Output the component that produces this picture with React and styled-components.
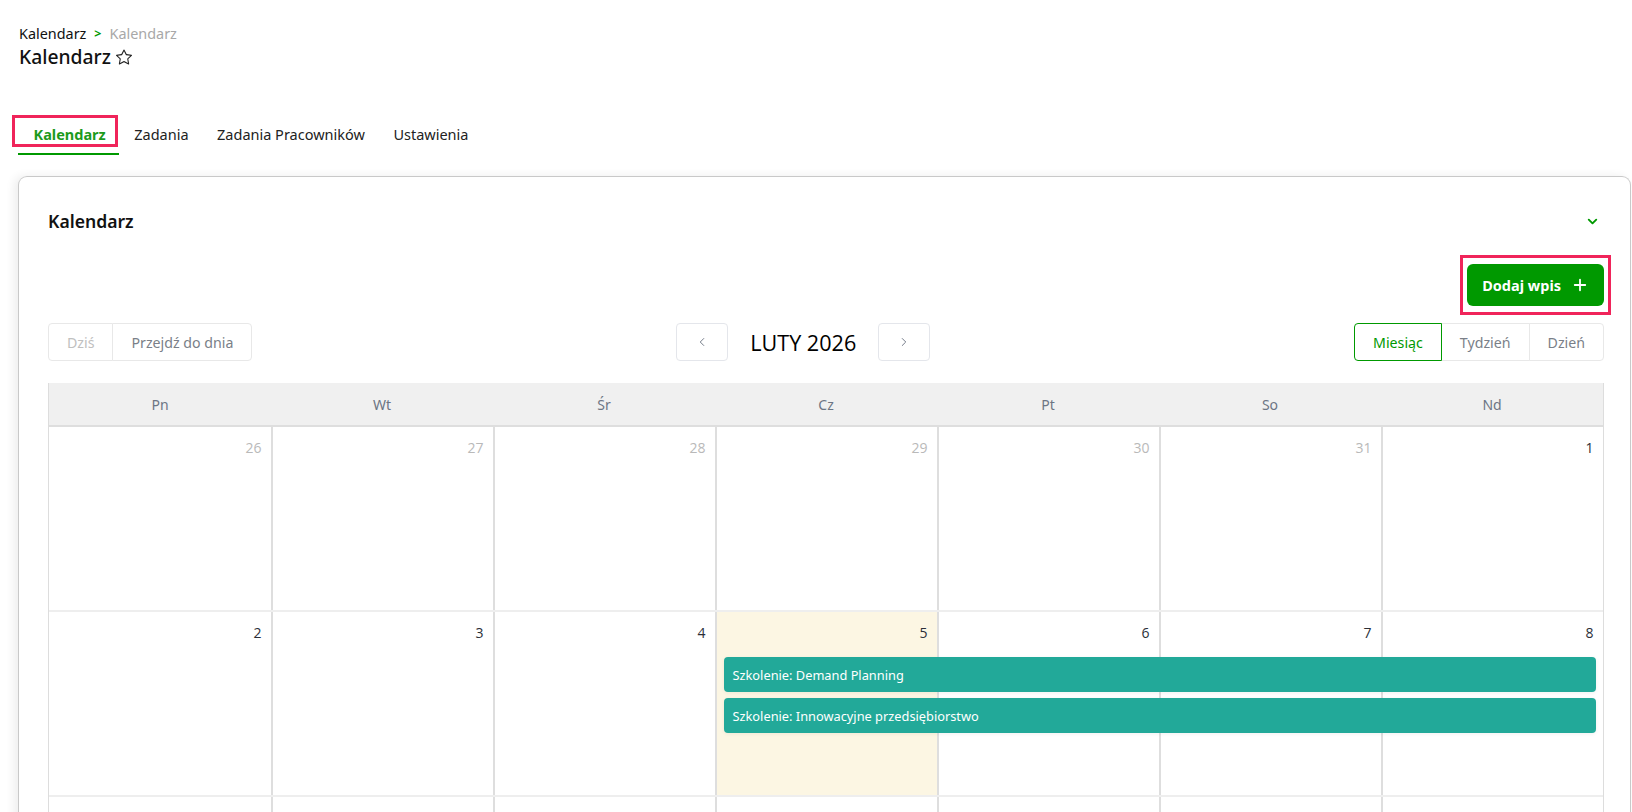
import React from 'react'
import styled, { createGlobalStyle, css } from 'styled-components'
import { BsStar } from 'react-icons/bs'
import { ChevronDown, ChevronLeft, ChevronRight, Plus } from 'lucide-react'

const green = '#009900'
const highlight = '#f0245a'

const GlobalStyle = createGlobalStyle`
  html { scrollbar-width: none; }
  html::-webkit-scrollbar { display: none; }
  body {
    margin: 0;
    background: #fff;
    font-family: 'Noto Sans', 'Open Sans', sans-serif;
    color: #111;
  }
`

const Page = styled.div`
  padding: 24px 1px 0 18px;
`

const Breadcrumb = styled.div`
  display: flex;
  align-items: center;
  gap: 8px;
  font-size: 14.4px;
  line-height: 20px;
  padding-left: 1px;
`
const Crumb = styled.span`
  color: ${p => (p.muted ? '#a8a8a8' : '#111')};
`
const Sep = styled.span`
  color: ${green};
  font-weight: 700;
  font-size: 12.5px;
`

const Title = styled.h1`
  margin: 0;
  display: flex;
  align-items: center;
  gap: 5px;
  font-size: 19.3px;
  line-height: 26px;
  font-weight: 500;
  padding-left: 1px;
  svg { color: #222; }
`

const Tabs = styled.nav`
  display: flex;
  margin-top: 45px;
`
const Tab = styled.div`
  position: relative;
  padding: 9px 13px 9px 15.5px;
  font-size: 14.5px;
  line-height: 20px;
  color: #222;
  border-bottom: 2px solid transparent;
  ${p => p.active && css`
    color: #1c9a1c;
    font-weight: 700;
    border-bottom-color: ${green};
  `}
  ${p => p.marked && css`
    &::after {
      content: '';
      position: absolute;
      top: 0;
      left: -6px;
      right: 1px;
      bottom: 6px;
      border: 3px solid ${highlight};
    }
  `}
`

const Card = styled.section`
  margin-top: 21px;
  border: 1px solid #c9c9c9;
  border-bottom: none;
  border-radius: 9px 9px 0 0;
  box-shadow: -4px 0 10px rgba(0, 0, 0, 0.07);
  padding: 33px 26px 0 29px;
`
const CardHeader = styled.div`
  display: flex;
  align-items: center;
  justify-content: space-between;
  padding-right: 4px;
`
const CardTitle = styled.h2`
  margin: 0;
  font-size: 17.6px;
  line-height: 22px;
  font-weight: 600;
`

const ActionRow = styled.div`
  display: flex;
  justify-content: flex-end;
  margin-top: 23px;
  margin-right: -7px;
`
const Marked = styled.div`
  border: 3px solid ${highlight};
  padding: 6px 4px 6px 4px;
`
const PrimaryButton = styled.button`
  display: flex;
  align-items: center;
  gap: 10px;
  height: 42px;
  padding: 0 15px 0 15px;
  border: none;
  border-radius: 6px;
  background: ${green};
  color: #fff;
  font-family: inherit;
  font-size: 14.5px;
  font-weight: 700;
`

const Toolbar = styled.div`
  display: flex;
  justify-content: space-between;
  align-items: center;
  margin-top: 8px;
`
const Group = styled.div`
  display: flex;
`
const GroupButton = styled.button`
  height: 38px;
  padding: 0 18px;
  background: #fff;
  font-family: inherit;
  font-size: 14.2px;
  color: ${p => p.color || '#7a7f88'};
  border: 1px solid #e8e8e8;
  margin-left: -1px;
  &:first-child { border-radius: 4px 0 0 4px; margin-left: 0; }
  &:last-child { border-radius: 0 4px 4px 0; }
  ${p => p.active && css`
    position: relative;
    border-color: ${green};
    color: ${green};
  `}
`
const Nav = styled.div`
  display: flex;
  align-items: center;
  gap: 22px;
`
const NavButton = styled.button`
  width: 52px;
  height: 38px;
  display: flex;
  align-items: center;
  justify-content: center;
  background: #fff;
  border: 1px solid #e4e6eb;
  border-radius: 4px;
  color: #6b7280;
`
const MonthLabel = styled.div`
  font-family: 'Open Sans', 'Noto Sans', sans-serif;
  font-size: 21.6px;
  color: #000;
`

const Calendar = styled.div`
  margin-top: 22px;
  border-left: 1px solid #ddd;
  border-right: 1px solid #ddd;
`
const HeadRow = styled.div`
  display: grid;
  grid-template-columns: repeat(7, 1fr);
  background: #f0f0f0;
  border-bottom: 2px solid #dedede;
`
const HeadCell = styled.div`
  height: 42px;
  display: flex;
  align-items: center;
  justify-content: center;
  font-size: 14px;
  color: #6c7584;
`

const Week = styled.div`
  display: grid;
  grid-template-columns: repeat(7, 1fr);
  grid-template-rows: 45px 41px 41px 1fr;
  min-height: 183px;
  border-bottom: 2px solid #eeeeee;
`
const DayCell = styled.div`
  grid-row: 1 / -1;
  grid-column: ${p => p.col};
  border-left: ${p => (p.col === 1 ? 'none' : '2px solid #dedede')};
  background: ${p => (p.today ? '#fcf6e3' : 'transparent')};
`
const DayNumber = styled.div`
  grid-row: 1;
  grid-column: ${p => p.col};
  text-align: right;
  padding: 11px 9.5px 0 0;
  font-family: 'Open Sans', 'Noto Sans', sans-serif;
  font-size: 14px;
  line-height: 20px;
  color: ${p => (p.other ? '#b9b9b9' : '#2b2f38')};
  z-index: 1;
`
const Event = styled.div`
  grid-row: ${p => p.row};
  grid-column: ${p => p.from} / ${p => p.to};
  height: 35px;
  margin: 0 7.5px 0 9px;
  display: flex;
  align-items: center;
  padding-left: 8.5px;
  border-radius: 4px;
  background: #22a999;
  color: #fff;
  font-size: 12.8px;
  box-shadow: 0 1px 4px rgba(0, 0, 0, 0.06);
  z-index: 2;
`

const dayNames = ['Pn', 'Wt', 'Śr', 'Cz', 'Pt', 'So', 'Nd']

const weeks = [
  { days: [26, 27, 28, 29, 30, 31, 1], other: [0, 1, 2, 3, 4, 5] },
  {
    days: [2, 3, 4, 5, 6, 7, 8], other: [], today: 3,
    events: [
      { title: 'Szkolenie: Demand Planning', from: 4, to: 8 },
      { title: 'Szkolenie: Innowacyjne przedsiębiorstwo', from: 4, to: 8 },
    ],
  },
  { days: [9, 10, 11, 12, 13, 14, 15], other: [] },
  { days: [16, 17, 18, 19, 20, 21, 22], other: [] },
  { days: [23, 24, 25, 26, 27, 28, 1], other: [6] },
]

export default function App() {
  return (
    <>
      <GlobalStyle />
      <Page>
        <Breadcrumb>
          <Crumb>Kalendarz</Crumb>
          <Sep>&gt;</Sep>
          <Crumb muted>Kalendarz</Crumb>
        </Breadcrumb>
        <Title>
          Kalendarz <BsStar size={16} />
        </Title>

        <Tabs>
          <Tab active marked>Kalendarz</Tab>
          <Tab>Zadania</Tab>
          <Tab>Zadania Pracowników</Tab>
          <Tab>Ustawienia</Tab>
        </Tabs>

        <Card>
          <CardHeader>
            <CardTitle>Kalendarz</CardTitle>
            <ChevronDown size={15} strokeWidth={3} color={green} />
          </CardHeader>

          <ActionRow>
            <Marked>
              <PrimaryButton>
                Dodaj wpis <Plus size={18} strokeWidth={2.4} />
              </PrimaryButton>
            </Marked>
          </ActionRow>

          <Toolbar>
            <Group>
              <GroupButton color="#c0c0c0">Dziś</GroupButton>
              <GroupButton>Przejdź do dnia</GroupButton>
            </Group>
            <Nav>
              <NavButton><ChevronLeft size={14} strokeWidth={1.6} /></NavButton>
              <MonthLabel>LUTY 2026</MonthLabel>
              <NavButton><ChevronRight size={14} strokeWidth={1.6} /></NavButton>
            </Nav>
            <Group>
              <GroupButton active>Miesiąc</GroupButton>
              <GroupButton>Tydzień</GroupButton>
              <GroupButton>Dzień</GroupButton>
            </Group>
          </Toolbar>

          <Calendar>
            <HeadRow>
              {dayNames.map(d => <HeadCell key={d}>{d}</HeadCell>)}
            </HeadRow>
            {weeks.map((w, wi) => (
              <Week key={wi}>
                {w.days.map((d, i) => (
                  <DayCell key={'c' + i} col={i + 1} today={w.today === i} />
                ))}
                {w.days.map((d, i) => (
                  <DayNumber key={'n' + i} col={i + 1} other={w.other.includes(i)}>
                    {d}
                  </DayNumber>
                ))}
                {(w.events || []).map((e, ei) => (
                  <Event key={ei} row={ei + 2} from={e.from} to={e.to}>
                    {e.title}
                  </Event>
                ))}
              </Week>
            ))}
          </Calendar>
        </Card>
      </Page>
    </>
  )
}
